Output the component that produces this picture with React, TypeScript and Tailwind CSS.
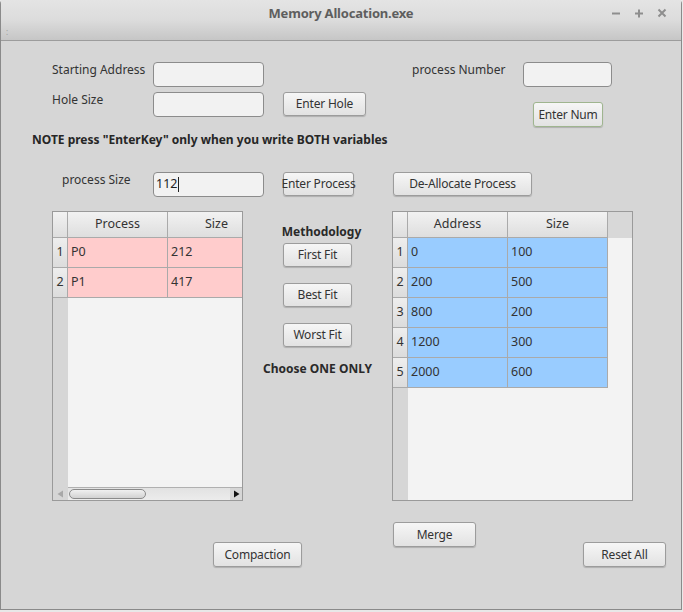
import React from "react";

const btn =
  "flex items-center justify-center whitespace-nowrap rounded-[3px] border border-[#9c9c9c] bg-gradient-to-b from-[#f6f6f6] to-[#e2e2e2] shadow-[0_1px_1px_rgba(0,0,0,0.18)] text-[12px] tracking-[-0.2px] text-[#333] leading-none";
const field = "rounded-[4px] border border-[#8c8c8c] bg-[#f2f2f2] h-[25px]";
const label = "text-[12px] leading-[16px] text-[#333] whitespace-nowrap";

function WinIcon({ kind }: { kind: "min" | "max" | "close" }) {
  return (
    <svg width="10" height="10" viewBox="0 0 10 10" className="text-[#8e8e8e]">
      {kind === "min" && <path d="M1 5.5h8" stroke="currentColor" strokeWidth="2" />}
      {kind === "max" && <path d="M1 5.5h8M5 1.5v8" stroke="currentColor" strokeWidth="2" />}
      {kind === "close" && <path d="M1.5 1.5l7 7M8.5 1.5l-7 7" stroke="currentColor" strokeWidth="2" />}
    </svg>
  );
}

interface TableProps {
  cols: { name: string; width: number }[];
  rows: string[][];
  rowBg: string;
  width: number;
  scroll?: boolean;
}

function DataTable({ cols, rows, rowBg, width, scroll }: TableProps) {
  return (
    <div
      className="h-[290px] border border-[#9a9a9a] bg-[#f3f3f3] flex flex-col overflow-hidden"
      style={{ width }}
    >
      <div className="flex flex-1 min-h-0">
        {/* row header column */}
        <div className="w-[15px] shrink-0 bg-[#d6d6d6] flex flex-col">
          <div className="h-[26px] border-b border-r border-[#aaaaaa] bg-gradient-to-b from-[#f2f2f2] to-[#dedede]" />
          {rows.map((_, i) => (
            <div
              key={i}
              className="h-[30px] border-b border-r border-[#aaaaaa] bg-gradient-to-b from-[#eeeeee] to-[#dcdcdc] flex items-center justify-center text-[12.5px] text-[#333]"
            >
              {i + 1}
            </div>
          ))}
        </div>
        <div className="flex-1 min-w-0 flex flex-col overflow-hidden">
          <div className="flex h-[26px]">
            {cols.map((c) => (
              <div
                key={c.name}
                className="shrink-0 h-[26px] border-b border-r border-[#aaaaaa] bg-gradient-to-b from-[#f2f2f2] to-[#dedede] flex items-center justify-center text-[12.5px] text-[#333]"
                style={{ width: c.width }}
              >
                {c.name}
              </div>
            ))}
            <div className="flex-1 h-[26px] bg-[#d8d8d8]" />
          </div>
          {rows.map((r, i) => (
            <div key={i} className="flex h-[30px]">
              {r.map((v, j) => (
                <div
                  key={j}
                  className={`shrink-0 h-[30px] border-b border-r border-[#aaaaaa] ${rowBg} flex items-center pl-[3px] text-[12.5px] text-[#333]`}
                  style={{ width: cols[j].width }}
                >
                  {v}
                </div>
              ))}
            </div>
          ))}
        </div>
      </div>
      {scroll && (
        <div className="h-[13px] flex shrink-0">
          <div className="w-[15px] bg-[#d6d6d6] flex items-center justify-center">
            <svg width="7" height="8" viewBox="0 0 7 8">
              <path d="M6 0.5v7L0.5 4z" fill="#a8a8a8" />
            </svg>
          </div>
          <div className="flex-1 flex items-center bg-gradient-to-b from-[#e2e2e2] to-[#ececec] border-t border-[#b0b0b0]">
            <div className="ml-[1px] w-[77px] h-[10px] rounded-full border border-[#8a8a8a] bg-gradient-to-b from-[#f0f0f0] to-[#d2d2d2]" />
            <div className="flex-1" />
            <div className="w-[12px] h-full bg-[#d6d6d6] flex items-center justify-center">
              <svg width="7" height="8" viewBox="0 0 7 8">
                <path d="M1 0.5v7L6.5 4z" fill="#111" />
              </svg>
            </div>
          </div>
        </div>
      )}
    </div>
  );
}

export default function App() {
  return (
    <div className="w-[683px] h-[612px] bg-[#e8e8e8] overflow-hidden font-['Noto_Sans',sans-serif]">
      <div className="w-[682px] h-[610px] border-l border-r border-b border-[#8a8a8a] rounded-t-[4px] bg-[#d6d6d6] flex flex-col">
        {/* title bar */}
        <div className="h-[41px] shrink-0 border-b border-[#9c9c9c] bg-gradient-to-b from-[#e4e4e4] via-[#dcdcdc] to-[#c6c6c6] relative">
          <div className="h-[28px] flex items-center justify-center text-[13px] font-bold text-[#5e5e5e] tracking-[-0.2px]">
            Memory Allocation.exe
          </div>
          <div className="absolute right-[14px] top-[8px] flex gap-[13px]">
            <WinIcon kind="min" />
            <WinIcon kind="max" />
            <WinIcon kind="close" />
          </div>
          <div className="absolute left-[5px] top-[28px] text-[8px] leading-none text-[#999]">:</div>
        </div>

        {/* body */}
        <div className="flex-1 flex flex-col">
          {/* row 1 */}
          <div className="flex items-start mt-[21px]">
            <div className={`${label} ml-[51px] w-[101px]`}>Starting Address</div>
            <div className={`${field} w-[111px]`} />
            <div className={`${label} ml-[148px] w-[111px]`}>process Number</div>
            <div className={`${field} w-[89px]`} />
          </div>

          {/* row 2 */}
          <div className="flex items-start mt-[5px]">
            <div className={`${label} ml-[51px] w-[101px]`}>Hole Size</div>
            <div className={`${field} w-[111px]`} />
            <div className={`${btn} ml-[19px] w-[83px] h-[24px]`}>Enter Hole</div>
            <div
              className={`${btn} ml-[167px] mt-[10px] w-[70px] h-[25px] border-[#9fb58f] shadow-[0_0_0_1px_#cfdcc2]`}
            >
              Enter Num
            </div>
          </div>

          <div className="ml-[31px] mt-[5px] text-[12px] leading-[16px] font-bold text-[#262626] whitespace-nowrap">
            NOTE press "EnterKey" only when you write BOTH variables
          </div>

          {/* row 3 */}
          <div className="flex items-start mt-[24px]">
            <div className={`${label} ml-[61px] w-[91px]`}>process Size</div>
            <div className={`${field} w-[111px] h-[24px] flex items-center pl-[2px] text-[12.5px] text-[#222]`}>
              112<span className="w-[1px] h-[15px] bg-[#222] ml-[1px]" />
            </div>
            <div className={`${btn} ml-[19px] w-[71px] h-[24px] text-[11.5px]`}>Enter Process</div>
            <div className={`${btn} ml-[39px] w-[139px] h-[24px]`}>De-Allocate Process</div>
          </div>

          {/* tables row */}
          <div className="flex items-start mt-[14px]">
            <div className="ml-[51px]">
              <DataTable
                width={191}
                scroll
                rowBg="bg-[#ffcccc]"
                cols={[
                  { name: "Process", width: 100 },
                  { name: "Size", width: 98 },
                ]}
                rows={[
                  ["P0", "212"],
                  ["P1", "417"],
                ]}
              />
            </div>
            <div className="w-[149px] flex flex-col items-center pt-[13px]">
              <div className="text-[12px] leading-[16px] font-bold text-[#2a2a2a] ml-[8px]">Methodology</div>
              <div className={`${btn} mt-[3px] w-[69px] h-[24px]`}>First Fit</div>
              <div className={`${btn} mt-[16px] w-[69px] h-[24px]`}>Best Fit</div>
              <div className={`${btn} mt-[16px] w-[69px] h-[24px]`}>Worst Fit</div>
              <div className="mt-[14px] text-[12px] leading-[16px] font-bold text-[#2a2a2a] whitespace-nowrap">
                Choose ONE ONLY
              </div>
            </div>
            <DataTable
              width={241}
              rowBg="bg-[#99ccff]"
              cols={[
                { name: "Address", width: 100 },
                { name: "Size", width: 100 },
              ]}
              rows={[
                ["0", "100"],
                ["200", "500"],
                ["800", "200"],
                ["1200", "300"],
                ["2000", "600"],
              ]}
            />
          </div>

          {/* bottom buttons */}
          <div className="flex items-start mt-[21px]">
            <div className={`${btn} ml-[212px] mt-[20px] w-[89px] h-[25px]`}>Compaction</div>
            <div className={`${btn} ml-[91px] w-[83px] h-[25px]`}>Merge</div>
            <div className={`${btn} ml-[107px] mt-[20px] w-[83px] h-[25px]`}>Reset All</div>
          </div>
        </div>
      </div>
    </div>
  );
}
